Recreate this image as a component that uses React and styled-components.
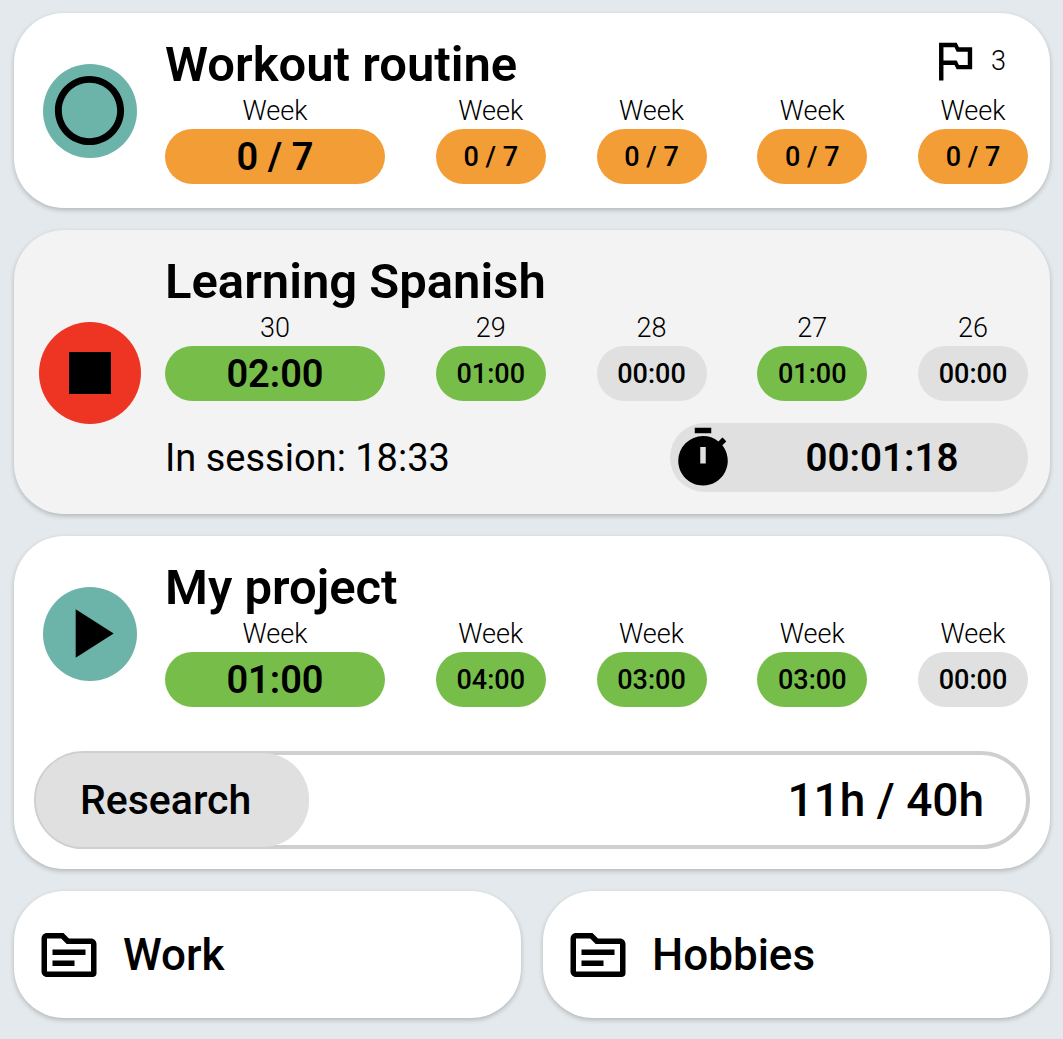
import React from 'react';
import styled, { createGlobalStyle } from 'styled-components';
import {
  MdRadioButtonUnchecked,
  MdStop,
  MdPlayArrow,
  MdOutlinedFlag,
  MdTimer,
  MdOutlineTopic,
} from 'react-icons/md';

const GlobalStyle = createGlobalStyle`
  html, body {
    margin: 0;
    padding: 0;
    background: #e3e9ec;
    font-family: Roboto, "Liberation Sans", sans-serif;
    color: #000;
  }
`;

const Page = styled.div`
  width: 1063px;
  height: 1039px;
  box-sizing: border-box;
  padding: 13px 13px 0 14px;
  display: flex;
  flex-direction: column;
  gap: 22px;
  overflow: hidden;
`;

const Card = styled.section`
  background: ${(p) => (p.$active ? '#f3f3f3' : '#fff')};
  border-radius: 50px;
  box-shadow: 0 2px 5px rgba(0, 0, 0, 0.22);
`;

const CardMain = styled.div`
  display: flex;
  align-items: center;
`;

const IconColumn = styled.div`
  width: 151px;
  flex: none;
  display: flex;
  justify-content: center;
`;

const RoundButton = styled.button`
  width: ${(p) => (p.$active ? 102 : 94)}px;
  height: ${(p) => (p.$active ? 102 : 94)}px;
  margin-top: ${(p) => (p.$active ? 2 : 0)}px;
  border: 0;
  padding: 0;
  border-radius: 50%;
  background: ${(p) => (p.$active ? '#ee3524' : '#6cb3a9')};
  color: #000;
  display: flex;
  align-items: center;
  justify-content: center;
`;

const Body = styled.div`
  flex: 1;
  min-width: 0;
  padding: 25px 22px 22px 0;
`;

const TitleRow = styled.div`
  display: flex;
  align-items: center;
  justify-content: space-between;
`;

const Title = styled.h2`
  margin: 0;
  font-size: 49px;
  line-height: 53px;
  font-weight: 600;
`;

const FlagBadge = styled.div`
  height: 36px;
  display: flex;
  align-items: center;
  gap: 10px;
  margin: 0 22px 8px 0;
  font-size: 27px;
  font-weight: 350;
`;

const Days = styled.div`
  display: flex;
  justify-content: space-between;
  padding-bottom: 2px;
`;

const Day = styled.div`
  display: flex;
  flex-direction: column;
  align-items: center;
`;

const DayLabel = styled.div`
  height: 38px;
  line-height: 40px;
  font-size: 27px;
  font-weight: 350;
`;

const Pill = styled.div`
  width: ${(p) => (p.$main ? 220 : 110)}px;
  height: 55px;
  border-radius: 27.5px;
  display: flex;
  align-items: center;
  justify-content: center;
  font-size: ${(p) => (p.$main ? 38 : 27)}px;
  font-weight: ${(p) => (p.$main ? 600 : 500)};
  background: ${(p) =>
    ({ orange: '#f39d37', green: '#76be49', grey: '#e0e0e0' }[p.$tone])};
`;

const SessionRow = styled.div`
  margin-top: 20px;
  height: 69px;
  display: flex;
  align-items: center;
  justify-content: space-between;
`;

const SessionText = styled.div`
  font-size: 38px;
`;

const Timer = styled.div`
  width: 358px;
  height: 69px;
  border-radius: 34.5px;
  background: #e0e0e0;
  display: flex;
  align-items: center;
`;

const TimerValue = styled.div`
  flex: 1;
  text-align: center;
  font-size: 38.5px;
  font-weight: 600;
`;

const Goal = styled.div`
  margin: 20px;
  height: 98px;
  box-sizing: border-box;
  border: 4px solid #cfcfcf;
  border-radius: 49px;
  display: flex;
  align-items: stretch;
  justify-content: space-between;
`;

const GoalFill = styled.div`
  background: #e0e0e0;
  border-radius: 46px;
  box-sizing: border-box;
  margin: -2px 0 -2px -2px;
  padding-left: 44px;
  display: flex;
  align-items: center;
  font-size: 41px;
  font-weight: 550;
`;

const GoalValue = styled.div`
  align-self: center;
  padding-right: 42px;
  font-size: 46px;
  font-weight: 550;
`;

const Folders = styled.div`
  display: grid;
  grid-template-columns: 1fr 1fr;
  gap: 22px;
`;

const Folder = styled(Card)`
  height: 127px;
  display: flex;
  align-items: center;
  gap: 21px;
  padding-left: 22px;
  font-size: 44px;
  font-weight: 500;
`;

const habits = [
  {
    title: 'Workout routine',
    icon: <MdRadioButtonUnchecked size={83} />,
    flags: 3,
    days: [
      ['Week', '0 / 7', 'orange'],
      ['Week', '0 / 7', 'orange'],
      ['Week', '0 / 7', 'orange'],
      ['Week', '0 / 7', 'orange'],
      ['Week', '0 / 7', 'orange'],
    ],
  },
  {
    title: 'Learning Spanish',
    icon: <MdStop size={84} />,
    active: true,
    days: [
      ['30', '02:00', 'green'],
      ['29', '01:00', 'green'],
      ['28', '00:00', 'grey'],
      ['27', '01:00', 'green'],
      ['26', '00:00', 'grey'],
    ],
  },
  {
    title: 'My project',
    icon: <MdPlayArrow size={83} />,
    days: [
      ['Week', '01:00', 'green'],
      ['Week', '04:00', 'green'],
      ['Week', '03:00', 'green'],
      ['Week', '03:00', 'green'],
      ['Week', '00:00', 'grey'],
    ],
    goal: { name: 'Research', done: 11, total: 40 },
  },
];

const Habit = ({ habit }) => (
  <Card $active={habit.active}>
    <CardMain>
      <IconColumn>
        <RoundButton $active={habit.active}>{habit.icon}</RoundButton>
      </IconColumn>
      <Body>
        <TitleRow>
          <Title>{habit.title}</Title>
          {habit.flags && (
            <FlagBadge>
              <MdOutlinedFlag size={53} />
              {habit.flags}
            </FlagBadge>
          )}
        </TitleRow>
        <Days>
          {habit.days.map(([label, value, tone], i) => (
            <Day key={i}>
              <DayLabel>{label}</DayLabel>
              <Pill $main={i === 0} $tone={tone}>
                {value}
              </Pill>
            </Day>
          ))}
        </Days>
        {habit.active && (
          <SessionRow>
            <SessionText>In session: 18:33</SessionText>
            <Timer>
              <MdTimer size={66} />
              <TimerValue>00:01:18</TimerValue>
            </Timer>
          </SessionRow>
        )}
      </Body>
    </CardMain>
    {habit.goal && (
      <Goal>
        <GoalFill style={{ width: `calc(${(habit.goal.done / habit.goal.total) * 100}% + 1px)` }}>
          {habit.goal.name}
        </GoalFill>
        <GoalValue>
          {habit.goal.done}h / {habit.goal.total}h
        </GoalValue>
      </Goal>
    )}
  </Card>
);

const App = () => (
  <Page>
    <GlobalStyle />
    {habits.map((habit) => (
      <Habit key={habit.title} habit={habit} />
    ))}
    <Folders>
      {['Work', 'Hobbies'].map((name) => (
        <Folder key={name}>
          <MdOutlineTopic size={66} />
          {name}
        </Folder>
      ))}
    </Folders>
  </Page>
);

export default App;
